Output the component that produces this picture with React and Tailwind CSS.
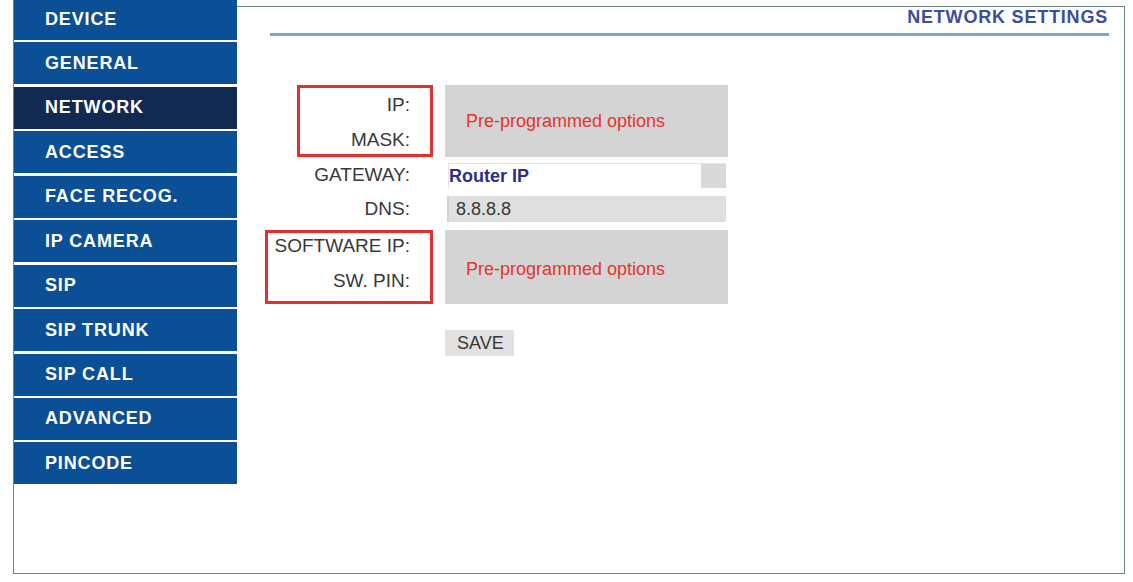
import React from 'react';

const menu = [
    'DEVICE',
    'GENERAL',
    'NETWORK',
    'ACCESS',
    'FACE RECOG.',
    'IP CAMERA',
    'SIP',
    'SIP TRUNK',
    'SIP CALL',
    'ADVANCED',
    'PINCODE',
];

export default function App() {
    const active = 'NETWORK';

    return (
        <div className="w-[1133px] h-[582px] bg-white overflow-hidden font-['Liberation_Sans',Arial,sans-serif]">
            <div className="ml-[13px] w-[1112px] h-[574px] flex border-l border-b border-[#6d8689]">
                {/* sidebar */}
                <div className="w-[223px] shrink-0 -mt-[2px] flex flex-col gap-[2.45px]">
                    {menu.map((item) => (
                        <div
                            key={item}
                            className={`h-[42px] flex items-center pl-[31px] text-white text-[18px] font-bold tracking-[0.85px] ${item === active ? 'bg-[#122a52]' : 'bg-[#0b4f97]'}`}
                        >
                            {item}
                        </div>
                    ))}
                </div>

                {/* content */}
                <div className="flex-1 mt-[6px] border-t border-r border-[#6d8689] flex flex-col">
                    <div className="h-[20px] leading-[20px] text-right pr-[16px] text-[18px] font-bold tracking-[0.8px] text-[#3b4d9c]">
                        NETWORK SETTINGS
                    </div>
                    <div className="mt-[6px] ml-[33px] mr-[15px] h-[3px] bg-[#78a5d6]"></div>

                    <div className="mt-[49px] flex flex-col text-[18px] text-[#383838]">
                        {/* IP / MASK */}
                        <div className="flex h-[72px]">
                            <div className="w-[196px] flex justify-end">
                                <div className="w-[136px] border-[3px] border-[#e0302f] flex flex-col items-end justify-center gap-[15px] pr-[20px] pt-[3px] leading-[20px] text-[19px]">
                                    <span>IP:</span>
                                    <span>MASK:</span>
                                </div>
                            </div>
                            <div className="ml-[12px] w-[283px] bg-[#d4d4d4] flex items-center pl-[21px] text-[#e4342e]">
                                Pre-programmed options
                            </div>
                        </div>

                        {/* GATEWAY */}
                        <div className="flex h-[25px] mt-[6px]">
                            <div className="w-[196px] flex items-center justify-end pr-[23px] text-[19px]">GATEWAY:</div>
                            <div className="ml-[15px] w-[278px] flex border-t border-l border-[#e4e4e4]">
                                <div className="flex-1 flex items-center font-bold text-[#2c2e8a]">Router IP</div>
                                <div className="w-[25px] bg-[#d9d9d9]"></div>
                            </div>
                        </div>

                        {/* DNS */}
                        <div className="flex h-[26px] mt-[8px]">
                            <div className="w-[196px] flex items-center justify-end pr-[23px] text-[19px]">DNS:</div>
                            <div className="ml-[14px] w-[279px] bg-[#dfdfdf] border-l-2 border-[#d2d2d2] flex items-center pl-[7px]">
                                8.8.8.8
                            </div>
                        </div>

                        {/* SOFTWARE IP / SW. PIN */}
                        <div className="flex h-[74px] mt-[8px]">
                            <div className="w-[196px] flex justify-end">
                                <div className="w-[168px] border-[3px] border-[#e0302f] flex flex-col items-end justify-center gap-[15px] pr-[20px] leading-[20px] pb-[8px] text-[19px]">
                                    <span>SOFTWARE IP:</span>
                                    <span>SW. PIN:</span>
                                </div>
                            </div>
                            <div className="ml-[12px] w-[283px] bg-[#d4d4d4] flex items-center pl-[21px] pt-[4px] text-[#e4342e]">
                                Pre-programmed options
                            </div>
                        </div>

                        {/* SAVE */}
                        <div className="flex mt-[26px]">
                            <div className="w-[196px]"></div>
                            <div className="ml-[12px] w-[69px] h-[26px] bg-[#e1e1e1] flex items-center pl-[12px]">SAVE</div>
                        </div>
                    </div>
                </div>
            </div>
        </div>
    );
}
